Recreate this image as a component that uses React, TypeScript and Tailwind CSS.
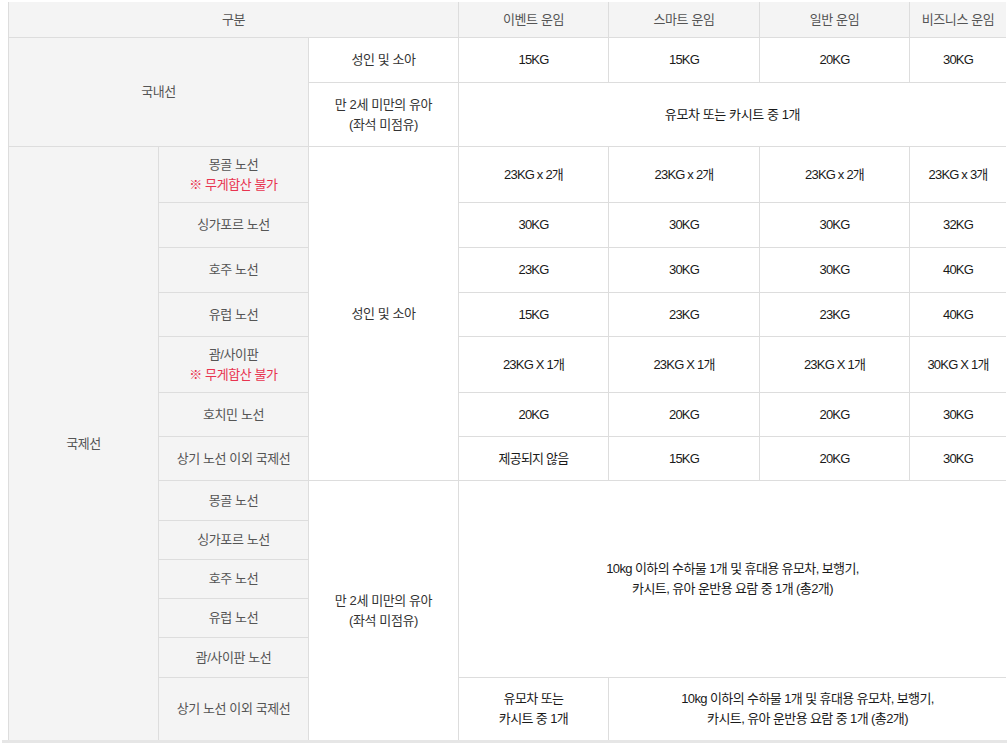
import React from "react";

const gray = "flex flex-col items-center justify-center text-center bg-[#f4f4f4] text-[#555]";
const white = "flex flex-col items-center justify-center text-center bg-white text-[#1a1a1a]";

const LONG1 = "10kg 이하의 수하물 1개 및 휴대용 유모차, 보행기,";
const LONG2 = "카시트, 유아 운반용 요람 중 1개 (총2개)";

type Row = { route: string; note?: boolean; row: number; vals: string[] };

const adultRows: Row[] = [
  { route: "몽골 노선", note: true, row: 4, vals: ["23KG x 2개", "23KG x 2개", "23KG x 2개", "23KG x 3개"] },
  { route: "싱가포르 노선", row: 5, vals: ["30KG", "30KG", "30KG", "32KG"] },
  { route: "호주 노선", row: 6, vals: ["23KG", "30KG", "30KG", "40KG"] },
  { route: "유럽 노선", row: 7, vals: ["15KG", "23KG", "23KG", "40KG"] },
  { route: "괌/사이판", note: true, row: 8, vals: ["23KG X 1개", "23KG X 1개", "23KG X 1개", "30KG X 1개"] },
  { route: "호치민 노선", row: 9, vals: ["20KG", "20KG", "20KG", "30KG"] },
  { route: "상기 노선 이외 국제선", row: 10, vals: ["제공되지 않음", "15KG", "20KG", "30KG"] },
];

const infantRoutes = [
  { route: "몽골 노선", row: 11 },
  { route: "싱가포르 노선", row: 12 },
  { route: "호주 노선", row: 13 },
  { route: "유럽 노선", row: 14 },
  { route: "괌/사이판 노선", row: 15 },
  { route: "상기 노선 이외 국제선", row: 16 },
];

const rowStart: Record<number, string> = {
  4: "row-start-4",
  5: "row-start-5",
  6: "row-start-6",
  7: "row-start-7",
  8: "row-start-8",
  9: "row-start-9",
  10: "row-start-10",
  11: "row-start-11",
  12: "row-start-12",
  13: "row-start-13",
  14: "row-start-14",
  15: "row-start-15",
  16: "row-start-16",
};

const colStart = ["col-start-4", "col-start-5", "col-start-6", "col-start-7"];

export default function App() {
  return (
    <div
      className="w-[1007px] h-[744px] bg-white overflow-hidden pt-[2px] text-[13px] leading-5 tracking-[-0.4px]"
      style={{ fontFamily: '"Liberation Sans", "Noto Sans CJK KR", sans-serif' }}
    >
      <div className="ml-[8px] w-[998px]">
        <div className="grid grid-cols-[149px_149px_149px_149px_150px_149px_96px] grid-rows-[35px_44px_63px_55px_44px_44px_43px_55px_43px_43px_39px_38px_38px_38px_39px_62px] gap-px bg-[#dddddd] pl-px">
          {/* Header */}
          <div className={`${gray} col-start-1 col-end-4 row-start-1`}>구분</div>
          <div className={`${gray} col-start-4 row-start-1`}>이벤트 운임</div>
          <div className={`${gray} col-start-5 row-start-1`}>스마트 운임</div>
          <div className={`${gray} col-start-6 row-start-1`}>일반 운임</div>
          <div className={`${gray} col-start-7 row-start-1`}>비즈니스 운임</div>

          {/* Domestic */}
          <div className={`${gray} col-start-1 col-end-3 row-start-2 row-end-4`}>국내선</div>
          <div className={`${white} col-start-3 row-start-2 text-[#333]`}>성인 및 소아</div>
          <div className={`${white} col-start-4 row-start-2 tracking-[-0.8px]`}>15KG</div>
          <div className={`${white} col-start-5 row-start-2 tracking-[-0.8px]`}>15KG</div>
          <div className={`${white} col-start-6 row-start-2 tracking-[-0.8px]`}>20KG</div>
          <div className={`${white} col-start-7 row-start-2 tracking-[-0.8px]`}>30KG</div>
          <div className={`${white} col-start-3 row-start-3 text-[#333]`}>
            <span>만 2세 미만의 유아</span>
            <span>(좌석 미점유)</span>
          </div>
          <div className={`${white} col-start-4 col-end-8 row-start-3`}>유모차 또는 카시트 중 1개</div>

          {/* International */}
          <div className={`${gray} col-start-1 row-start-4 row-end-17`}>국제선</div>
          <div className={`${white} col-start-3 row-start-4 row-end-11 text-[#333]`}>성인 및 소아</div>

          {adultRows.map((r) => (
            <React.Fragment key={r.row}>
              <div className={`${gray} col-start-2 ${rowStart[r.row]}`}>
                <span>{r.route}</span>
                {r.note && <span className="text-[#e8334f]">※ 무게합산 불가</span>}
              </div>
              {r.vals.map((v, i) => (
                <div key={i} className={`${white} ${colStart[i]} ${rowStart[r.row]} tracking-[-0.8px]`}>
                  {v}
                </div>
              ))}
            </React.Fragment>
          ))}

          {infantRoutes.map((r) => (
            <div key={r.row} className={`${gray} col-start-2 ${rowStart[r.row]}`}>
              {r.route}
            </div>
          ))}

          <div className={`${white} col-start-3 row-start-11 row-end-17 text-[#333]`}>
            <span>만 2세 미만의 유아</span>
            <span>(좌석 미점유)</span>
          </div>
          <div className={`${white} col-start-4 col-end-8 row-start-11 row-end-16 tracking-[-0.6px]`}>
            <span>{LONG1}</span>
            <span>{LONG2}</span>
          </div>
          <div className={`${white} col-start-4 row-start-16 tracking-[-0.6px]`}>
            <span>유모차 또는</span>
            <span>카시트 중 1개</span>
          </div>
          <div className={`${white} col-start-5 col-end-8 row-start-16 tracking-[-0.6px]`}>
            <span>{LONG1}</span>
            <span>{LONG2}</span>
          </div>
        </div>
      </div>
      <div className="ml-[2px] h-[3px] bg-[#e6e6e6]" />
    </div>
  );
}
